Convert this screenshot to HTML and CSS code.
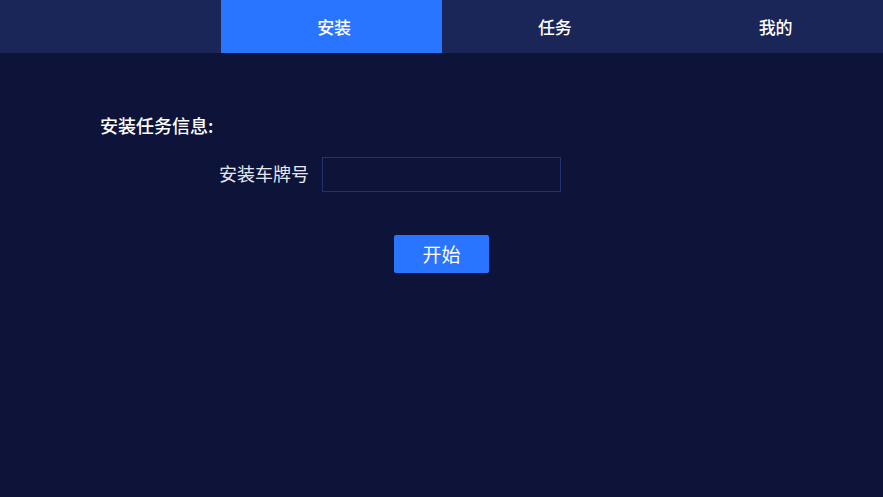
FILE: index.html
```html
<!DOCTYPE html>
<html lang="zh">
<head>
<meta charset="utf-8">
<link rel="stylesheet" href="styles.css">
</head>
<body>
<header class="tabs">
  <div class="tab tab-empty"></div>
  <div class="tab tab-active">安装</div>
  <div class="tab">任务</div>
  <div class="tab">我的</div>
</header>
<main class="main">
  <h2 class="title">安装任务信息:</h2>
  <div class="form-row">
    <label class="label">安装车牌号</label>
    <input class="input" type="text">
    <div></div>
  </div>
  <div class="actions">
    <button class="btn">开始</button>
  </div>
</main>
</body>
</html>
```
FILE: styles.css
```css
* { box-sizing: border-box; }
html, body {
  margin: 0;
  height: 100%;
  background: #0e1439;
  font-family: "Noto Sans CJK SC", "Noto Sans", sans-serif;
  color: #fff;
}
.tabs {
  display: grid;
  grid-template-columns: repeat(4, 1fr);
  height: 53px;
  background: #1a2558;
}
.tab {
  display: flex;
  align-items: center;
  justify-content: center;
  font-size: 17px;
  font-weight: 500;
  color: #fff;
  padding-left: 6px;
}
.tab-active {
  background: #2a75ff;
}
.main {
  padding: 60px 0 0 0;
}
.title {
  margin: 0 0 20px 100px;
  font-size: 18px;
  line-height: 24px;
  font-weight: 500;
  color: #fff;
}
.form-row {
  display: grid;
  grid-template-columns: 1fr 239px 1fr;
  align-items: center;
}
.label {
  justify-self: end;
  margin-right: 13px;
  padding-bottom: 3px;
  font-size: 18px;
  color: #e6e8f0;
}
.input {
  height: 35px;
  background: #0e1439;
  border: 1px solid #243272;
  outline: none;
  color: #fff;
  font-size: 16px;
}
.actions {
  display: flex;
  justify-content: center;
  margin-top: 43px;
}
.btn {
  width: 95px;
  height: 38px;
  padding-bottom: 2px;
  background: #2a75ff;
  border: none;
  border-radius: 2px;
  color: #fff;
  font-family: inherit;
  font-size: 19px;
}
```
